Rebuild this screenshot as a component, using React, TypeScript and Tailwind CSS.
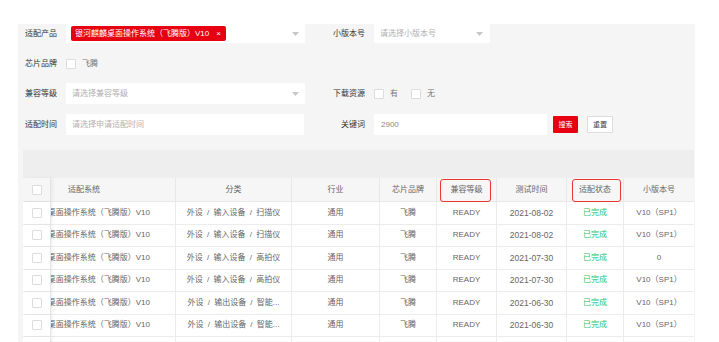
import React from "react";

const Caret = () => (
  <svg width="7" height="4" viewBox="0 0 7 4" className="shrink-0">
    <path d="M0 0 L7 0 L3.5 4 Z" fill="#c8c8c8" />
  </svg>
);

const Box = ({ cls = "" }: { cls?: string }) => (
  <span className={`inline-block w-[10px] h-[10px] bg-white border border-[#dcdcdc] rounded-[1px] shrink-0 ${cls}`} />
);

const rows = [
  { cat: "外设 / 输入设备 / 扫描仪", date: "2021-08-02", ver: "V10（SP1）" },
  { cat: "外设 / 输入设备 / 扫描仪", date: "2021-08-02", ver: "V10（SP1）" },
  { cat: "外设 / 输入设备 / 高拍仪", date: "2021-07-30", ver: "0" },
  { cat: "外设 / 输入设备 / 高拍仪", date: "2021-07-30", ver: "V10（SP1）" },
  { cat: "外设 / 输出设备 / 智能...", date: "2021-06-30", ver: "V10（SP1）" },
  { cat: "外设 / 输出设备 / 智能...", date: "2021-06-30", ver: "V10（SP1）" },
  { cat: "", date: "", ver: "" },
];

const cols = ["w-[125px]", "w-[116px]", "w-[88px]", "w-[57px]", "w-[60px]", "w-[70px]", "w-[57px]", "w-[70px]"];

export default function App() {
  return (
    <div className="w-[719px] h-[342px] bg-white overflow-hidden font-['Liberation_Sans','Noto_Sans_CJK_SC',sans-serif] text-[8px] leading-none">
      <div className="ml-[18px] mt-[24px] w-[677px] h-[318px] overflow-hidden bg-[#f5f5f5]">
        {/* Row 1 */}
        <div className="flex items-center h-[19px] pl-[7px]">
          <div className="w-[41px] text-[#333]">适配产品</div>
          <div className="w-[239px] h-full bg-white flex items-center pl-[5px] pr-[6px]">
            <div className="h-[15px] bg-[#e60012] rounded-[2px] text-white flex items-center pl-[4px] pr-[5px] gap-[7px] whitespace-nowrap">
              <span>银河麒麟桌面操作系统（飞腾版）V10</span>
              <span className="text-[8px]">×</span>
            </div>
            <div className="flex-1" />
            <Caret />
          </div>
          <div className="w-[69px] text-right pr-[9px] text-[#333]">小版本号</div>
          <div className="w-[116px] h-full bg-white flex items-center pl-[6px] pr-[7px] text-[#b0b0b0]">
            <span className="flex-1">请选择小版本号</span>
            <Caret />
          </div>
        </div>
        {/* Row 2 */}
        <div className="flex items-center h-[21px] mt-[10px] pl-[7px]">
          <div className="w-[41px] text-[#333]">芯片品牌</div>
          <Box />
          <span className="ml-[6px] text-[#777]">飞腾</span>
        </div>
        {/* Row 3 */}
        <div className="flex items-center h-[21px] mt-[9px] pl-[7px]">
          <div className="w-[41px] text-[#333]">兼容等级</div>
          <div className="w-[239px] h-full bg-white flex items-center pl-[6px] pr-[6px] text-[#b0b0b0]">
            <span className="flex-1">请选择兼容等级</span>
            <Caret />
          </div>
          <div className="w-[69px] text-right pr-[9px] text-[#333]">下载资源</div>
          <Box />
          <span className="ml-[6px] text-[#777]">有</span>
          <Box cls="ml-[13px]" />
          <span className="ml-[6px] text-[#777]">无</span>
        </div>
        {/* Row 4 */}
        <div className="flex items-center h-[21px] mt-[10px] pl-[7px]">
          <div className="w-[41px] text-[#333]">适配时间</div>
          <div className="w-[238px] h-full bg-white flex items-center pl-[6px] text-[#b0b0b0]">请选择申请适配时间</div>
          <div className="w-[70px] text-right pr-[9px] text-[#333]">关键词</div>
          <div className="w-[173px] h-full bg-white flex items-center pl-[7px] text-[#888]">2900</div>
          <div className="ml-[6px] w-[25px] h-[17px] bg-[#e60012] text-white text-[7px] flex items-center justify-center rounded-[1px]">搜索</div>
          <div className="ml-[9px] w-[26px] h-[17px] bg-white border border-[#dcdcdc] text-[#444] text-[7px] flex items-center justify-center rounded-[1px]">重置</div>
        </div>
        {/* Table */}
        <div className="mt-[15px] ml-[5px] w-[671px] flex flex-col">
          <div className="h-[28px] shrink-0 bg-[#eeeeee]" />
          <div className="flex h-[24px] shrink-0 bg-[#f6f6f6] border-b border-[#e8e8e8] text-[#666]">
            <div className="w-[28px] flex items-center pl-[9px] border-r border-[#e4e4e4] shadow-[2px_0_3px_rgba(0,0,0,0.05)] relative z-10 bg-[#f6f6f6]">
              <Box />
            </div>
            <div className={`${cols[0]} flex items-center pl-[17px] border-r border-[#e8e8e8]`}>适配系统</div>
            <div className={`${cols[1]} flex items-center justify-center border-r border-[#e8e8e8]`}>分类</div>
            <div className={`${cols[2]} flex items-center justify-center border-r border-[#e8e8e8]`}>行业</div>
            <div className={`${cols[3]} flex items-center justify-center border-r border-[#e8e8e8]`}>芯片品牌</div>
            <div className={`${cols[4]} flex items-center justify-center border-r border-[#e8e8e8] relative`}>
              兼容等级
              <div className="absolute left-[3px] right-[5px] top-[1px] bottom-[-1px] border-[1.5px] border-[#e8392c] rounded-[3px]" />
            </div>
            <div className={`${cols[5]} flex items-center justify-center border-r border-[#e8e8e8]`}>测试时间</div>
            <div className={`${cols[6]} flex items-center justify-center border-r border-[#e8e8e8] relative`}>
              适配状态
              <div className="absolute left-[5px] right-[2px] top-[1px] bottom-[-1px] border-[1.5px] border-[#e8392c] rounded-[3px]" />
            </div>
            <div className={`${cols[7]} flex items-center justify-center`}>小版本号</div>
          </div>
          {rows.map((r, i) => (
            <div key={i} className="flex h-[22.5px] shrink-0 bg-white border-b border-[#ececec] text-[#666]">
              <div className="w-[28px] flex items-center pl-[9px] border-r border-[#e4e4e4] shadow-[2px_0_3px_rgba(0,0,0,0.05)] relative z-10 bg-white">
                <Box />
              </div>
              <div className={`${cols[0]} flex items-center justify-end pr-[25px] overflow-hidden whitespace-nowrap border-r border-[#ececec]`}>
                {r.cat ? "银河麒麟桌面操作系统（飞腾版）V10" : ""}
              </div>
              <div className={`${cols[1]} flex items-center justify-center whitespace-nowrap border-r border-[#ececec] [word-spacing:2px]`}>{r.cat}</div>
              <div className={`${cols[2]} flex items-center justify-center border-r border-[#ececec]`}>{r.cat ? "通用" : ""}</div>
              <div className={`${cols[3]} flex items-center justify-center border-r border-[#ececec]`}>{r.cat ? "飞腾" : ""}</div>
              <div className={`${cols[4]} flex items-center justify-center border-r border-[#ececec]`}>{r.cat ? "READY" : ""}</div>
              <div className={`${cols[5]} flex items-center justify-center border-r border-[#ececec] text-[8.5px]`}>{r.date}</div>
              <div className={`${cols[6]} flex items-center justify-center border-r border-[#ececec] text-[#2bc46a]`}>{r.cat ? "已完成" : ""}</div>
              <div className={`${cols[7]} flex items-center justify-center`}>{r.ver}</div>
            </div>
          ))}
        </div>
      </div>
    </div>
  );
}
